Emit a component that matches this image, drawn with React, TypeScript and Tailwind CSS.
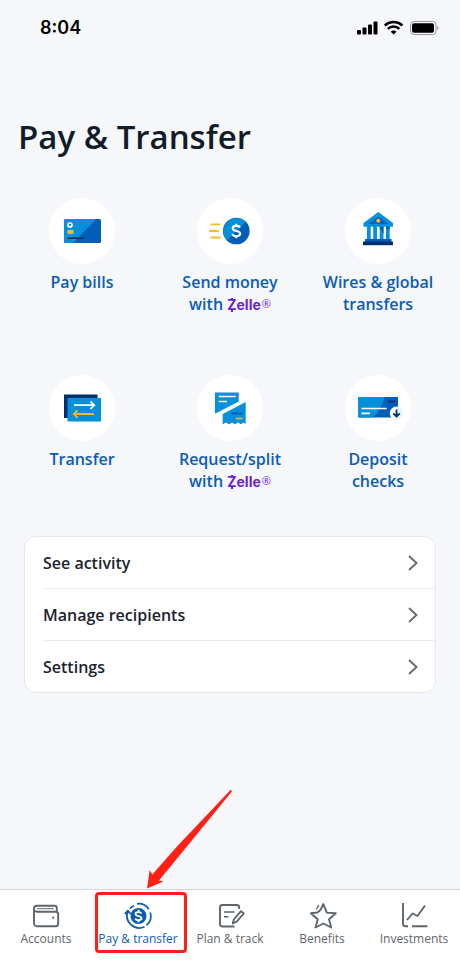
import React from 'react'

interface Action {
  lines: string[]
  zelle?: boolean
  icon: React.ReactNode
}

const Zelle = () => (
  <span className="inline-flex items-center gap-px whitespace-nowrap align-top text-[#6d1ed4]">
    <span className="relative font-['Inter',sans-serif] text-[14px] font-bold leading-6">
      Zelle
      <span className="absolute left-1 top-[5px] h-0.5 w-0.5 bg-[#6d1ed4]"></span>
      <span className="absolute bottom-[5px] left-1 h-0.5 w-0.5 bg-[#6d1ed4]"></span>
    </span>
    <span className="pb-0.5 font-['Open_Sans',sans-serif] text-[11px] font-normal leading-3">®</span>
  </span>
)

const CardIcon = () => (
  <svg viewBox="0 0 66 66" className="size-full" aria-hidden="true">
    <rect x="15" y="21" width="37" height="24" rx="1.5" fill="#005eb8" />
    <path d="M16.5 21H47.5L24 45H16.5A1.5 1.5 0 0 1 15 43.5V22.5A1.5 1.5 0 0 1 16.5 21Z" fill="#0490db" />
    <circle cx="21" cy="27" r="2" fill="none" stroke="#fff" strokeWidth="1.7" />
    <rect x="18.5" y="32" width="6" height="4" rx="0.5" fill="#fdb725" />
    <path d="M18.5 40.2H35" stroke="#003778" strokeWidth="1.6" />
  </svg>
)

const SendIcon = () => (
  <svg viewBox="0 0 66 66" className="size-full" aria-hidden="true">
    <path d="M13.5 26.4H23.5M12 33H21.7M13.5 39.5H23.5" stroke="#fdb92e" strokeWidth="1.8" />
    <circle cx="39.3" cy="33" r="13.3" fill="#005eb8" />
    <path d="M29.9 42.4A13.3 13.3 0 0 1 48.7 23.6Z" fill="#0490db" />
    <path d="M43 29.5C42.5 28.2 41 27.9 39.3 27.9C37.2 27.9 35.7 28.8 35.7 30.4C35.7 34 43.2 32 43.2 35.6C43.2 37.3 41.5 38.2 39.3 38.2C37.3 38.2 35.8 37.5 35.3 36M39.3 25.8V28M39.3 38V40.3" fill="none" stroke="#fff" strokeWidth="2.1" />
  </svg>
)

const BankIcon = () => (
  <svg viewBox="0 0 66 66" className="size-full" aria-hidden="true">
    <path d="M22 28H25.7V42H22ZM28.2 28H32V42H28.2ZM34.7 28H38.5V42H34.7ZM41 28H44.7V42H41Z" fill="#0490db" />
    <path d="M34.7 28H38.5V36L34.7 30ZM41 28H44.7V31H41Z" fill="#005eb8" />
    <path d="M33.3 14L48 25V28.8H18.5V25Z" fill="#0490db" />
    <path d="M33.3 18.5L43.5 26H23Z" fill="#0065bd" />
    <circle cx="33.3" cy="22.7" r="2" fill="#fdb725" />
    <rect x="20" y="41" width="26.5" height="3" fill="#005eb8" />
    <rect x="18" y="43.5" width="30" height="3.7" fill="#002e6e" />
  </svg>
)

const TransferIcon = () => (
  <svg viewBox="0 0 66 66" className="size-full" aria-hidden="true">
    <rect x="15" y="19.5" width="33.5" height="23.5" fill="#002e6e" />
    <rect x="18.5" y="23" width="33.5" height="23.5" fill="#0490db" />
    <path d="M25 30.2H45M41.5 26.5L45.2 30.2L41.5 33.9" fill="none" stroke="#fff" strokeWidth="1.8" />
    <path d="M45 39H25M28.5 35.3L24.8 39L28.5 42.7" fill="none" stroke="#fdb725" strokeWidth="1.8" />
  </svg>
)

const SplitIcon = () => (
  <svg viewBox="0 0 66 66" className="size-full" aria-hidden="true">
    <path d="M18 17.5H41.7V26.5L18 38.7Z" fill="#0490db" />
    <path d="M48.7 27V49L46.5 47.5L43.8 49.3L41 47.5L38 49.3L35 47.5L32 49.3L29 47.5L25.7 49.3V39Z" fill="#0490db" />
    <path d="M21.7 21.5H38.7M21.7 26.5H30" stroke="#fff" strokeWidth="1.7" />
    <path d="M34 38.5H45.5" stroke="#005eb8" strokeWidth="1.8" />
    <path d="M38.7 43.5H45.5" stroke="#d9b04a" strokeWidth="1.9" />
  </svg>
)

const DepositIcon = () => (
  <svg viewBox="0 0 66 66" className="size-full" aria-hidden="true">
    <rect x="13.3" y="22" width="39.7" height="20.5" fill="#005eb8" />
    <path d="M13.3 22H39.3C37.5 31 33.5 38 27.3 42.5H13.3Z" fill="#0490db" />
    <path d="M16.5 33.5H41.7M16.5 38.3H25" stroke="#fff" strokeWidth="1.7" />
    <path d="M43 26.5H50.3" stroke="#002e6e" strokeWidth="1.7" />
    <circle cx="51.5" cy="38.3" r="6.7" fill="#fff" />
    <path d="M53.5 32A6.7 6.7 0 0 1 50 44.8Z" fill="#e1f3fc" />
    <path d="M51.5 34.5V41.2M48.3 38.5L51.5 41.5L54.7 38.5" fill="none" stroke="#002e6e" strokeWidth="1.8" />
  </svg>
)

const actions: Action[] = [
  { lines: ['Pay bills'], icon: <CardIcon /> },
  { lines: ['Send money', 'with'], zelle: true, icon: <SendIcon /> },
  { lines: ['Wires & global', 'transfers'], icon: <BankIcon /> },
  { lines: ['Transfer'], icon: <TransferIcon /> },
  { lines: ['Request/split', 'with'], zelle: true, icon: <SplitIcon /> },
  { lines: ['Deposit', 'checks'], icon: <DepositIcon /> },
]

const links = ['See activity', 'Manage recipients', 'Settings']

const tabs = [
  {
    label: 'Accounts',
    icon: (
      <>
        <path d="M24.8 9.5V6A2.3 2.3 0 0 0 22.5 3.7H4.5A2.5 2.5 0 0 0 2 6.2V21.5A2.7 2.7 0 0 0 4.7 24.2H23.5A2.7 2.7 0 0 0 26.2 21.5V12.2A2.5 2.5 0 0 0 23.7 9.7H5A3 3 0 0 1 2 7" />
        <path d="M5 6.7H22" strokeWidth="1" />
        <circle cx="21.2" cy="15.7" r="1.1" fill="currentColor" stroke="none" />
      </>
    ),
  },
  {
    label: 'Pay & transfer',
    active: true,
    icon: (
      <>
        <circle cx="14.5" cy="14" r="8" fill="currentColor" stroke="none" />
        <path d="M17.5 11.5C16.8 9.7 11.5 9.5 11.5 12C11.5 14.9 17.5 13.3 17.5 16.2C17.5 18.7 12 18.6 11.3 16.4M14.5 7.8V10M14.5 18V20.3" stroke="#fff" strokeWidth="1.8" />
        <path d="M13 1.8A12.3 12.3 0 0 1 24.8 7.2M26.3 10.5A12.3 12.3 0 0 1 22.5 23.4" strokeWidth="1.7" />
        <path d="M20.5 24.8A12.3 12.3 0 0 1 3.8 9.3M0.8 12L3.8 8.7L6.8 12" strokeWidth="1.8" />
        <path d="M5.8 6.6A11 11 0 0 1 10 3.8" strokeWidth="1.7" />
      </>
    ),
  },
  {
    label: 'Plan & track',
    icon: (
      <>
        <path d="M23.2 7V5.5A2.5 2.5 0 0 0 20.7 3H6.5A2.5 2.5 0 0 0 4 5.5V22A2.5 2.5 0 0 0 6.500 24.5H18.5" />
        <path d="M8 10H18.5M8 14.7H12.5" strokeWidth="1.4" />
        <path d="M25 9.2L27.8 11.5L20.7 19.7L16.8 21.5L17.8 17.5Z" />
      </>
    ),
  },
  {
    label: 'Benefits',
    icon: (
      <>
        <path d="M12.8 7.5L15.3 2L18.8 10.6L27.8 11.3L21 17.2L23.2 25.5L15.3 21.5L7.5 25.5L9.7 17.2L2.8 11.3L9.5 10.5L12.8 7.5" />
        <path d="M8.3 7.5L10.8 3" strokeWidth="1.4" />
      </>
    ),
  },
  {
    label: 'Investments',
    icon: (
      <>
        <path d="M3 1V22A2.5 2.5 0 0 0 5.5 24.3H8M12 24.3H27.5" />
        <path d="M7 18L12.5 11.5L17.5 14L25 3.5" />
      </>
    ),
  },
]

const StatusBar = () => (
  <header className="flex h-14 items-center justify-between pl-10 pr-5 text-black">
    <time className="font-['Inter',sans-serif] text-lg font-semibold">8:04</time>
    <svg viewBox="0 0 84 18" className="h-[18px] w-[84px]" aria-label="Signal, Wi-Fi and battery">
      <rect x="1" y="11" width="4" height="4.5" rx="1" />
      <rect x="6.5" y="8.5" width="4" height="7" rx="1" />
      <rect x="12" y="5.5" width="4" height="10" rx="1" />
      <rect x="17.5" y="2.5" width="4" height="13" rx="1" />
      <path d="M28.8 6.5A13 13 0 0 1 46.4 6.5M31.8 9.8A8.5 8.5 0 0 1 43.4 9.8" fill="none" stroke="#000" strokeWidth="2.5" />
      <path d="M34.7 12.8A4.3 4.3 0 0 1 40.5 12.8L37.6 15.5Z" />
      <rect x="54.5" y="2.5" width="25.5" height="13" rx="3.5" fill="none" stroke="#999" />
      <rect x="56" y="4.2" width="22" height="9.6" rx="2" />
      <path d="M81.2 7A2.2 2.2 0 0 1 81.2 11Z" fill="#999" />
    </svg>
  </header>
)

const App: React.FC = () => {
  return (
    <div className="flex min-h-screen flex-col bg-[#f5f7fa] font-['Open_Sans',sans-serif]">
      <StatusBar />

      <main className="flex-1">
        <h1 className="mt-[57px] px-[18px] text-[33px] font-semibold leading-12 text-[#121c28]">Pay &amp; Transfer</h1>

        <div className="mt-[37px] grid grid-cols-3 gap-y-[60px] px-2">
          {actions.map((action) => (
            <button key={action.lines.join(' ')} type="button" className="flex flex-col items-center">
              <span className="size-[66px] rounded-full bg-white">{action.icon}</span>
              <span className="mt-[7px] text-base font-semibold leading-[22px] text-[#0c5cb5]">
                {action.lines.map((line, i) => (
                  <span key={line} className="block h-[22px] whitespace-nowrap">
                    {line} {action.zelle && i === action.lines.length - 1 && <Zelle />}
                  </span>
                ))}
              </span>
            </button>
          ))}
        </div>

        <ul className="mx-6 mt-[44px] rounded-xl border border-[#e4e8e8] bg-white pl-[18px]">
          {links.map((link) => (
            <li key={link} className="border-b border-[#e8eaeb] last:border-b-0">
              <a href="#" className="flex h-[51px] items-center justify-between pr-4 text-base font-semibold text-[#1b232e]">
                {link}
                <svg viewBox="0 0 12 18" className="h-[18px] w-3" fill="none" stroke="#666" strokeWidth="1.8" aria-hidden="true">
                  <path d="M2 2L9.5 9L2 16" />
                </svg>
              </a>
            </li>
          ))}
        </ul>
      </main>

      <nav className="grid h-[71px] grid-cols-5 border-t border-[#d2d5d8] bg-white">
        {tabs.map((tab) => (
          <a
            key={tab.label}
            href="#"
            aria-current={tab.active ? 'page' : undefined}
            className={`relative flex flex-col items-center pt-3 text-xs ${tab.active ? 'text-[#0c5cb5]' : 'text-[#5f666b]'}`}
          >
            <svg viewBox="0 0 28 28" className="size-7 overflow-visible" fill="none" stroke="currentColor" strokeWidth="1.9" strokeLinejoin="round" aria-hidden="true">
              {tab.icon}
            </svg>
            <span className="whitespace-nowrap leading-[17px]">{tab.label}</span>
            {tab.active && (
              <>
                {/* Callout box and arrow */}
                <span className="absolute left-[3px] top-0.5 h-[61px] w-[92px] rounded-sm border-3 border-[#ff2015]"></span>
                <svg viewBox="0 0 86 100" className="absolute -top-[101px] left-[54px] h-[100px] w-[86px]" fill="#ff2015" aria-hidden="true">
                  <path d="M84.5 1Q86.5 1 85.5 3L40.5 58L13 91.5L17.5 92.5L1 99.5L3.7 81L6.3 85.5L31 57.5Z" />
                </svg>
              </>
            )}
          </a>
        ))}
      </nav>
    </div>
  )
}

export default App
